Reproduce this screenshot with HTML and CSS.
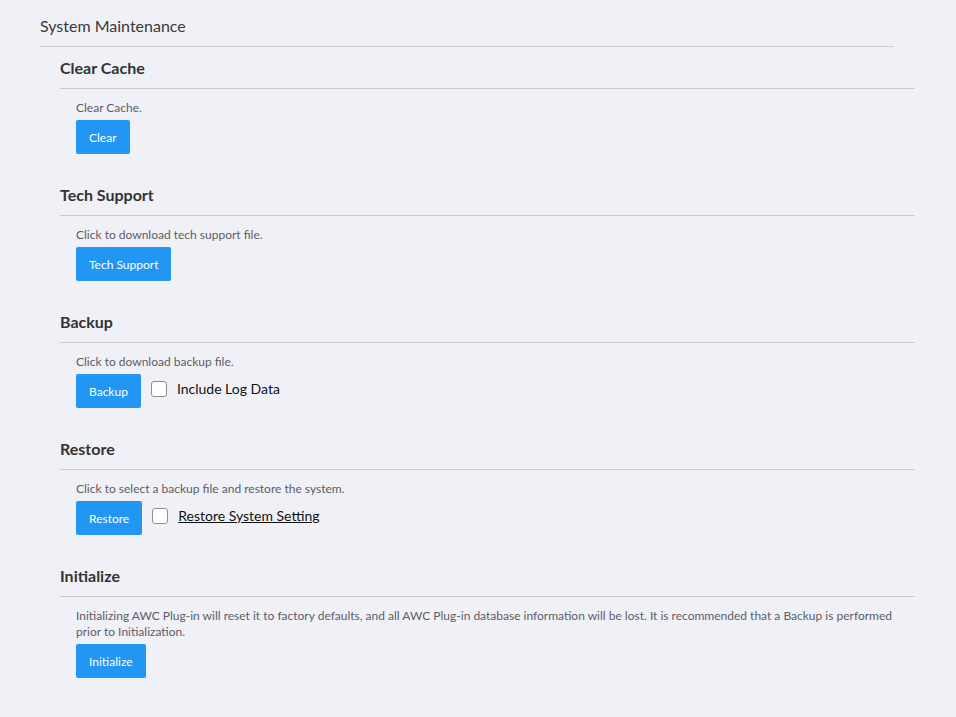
FILE: index.html
```html
<!DOCTYPE html>
<html lang="en">
<head>
  <meta charset="UTF-8" />
  <meta name="viewport" content="width=device-width, initial-scale=1.0"/>
  <title>System Maintenance</title>
  <link rel="stylesheet" href="styles.css">
</head>
<body>

  <div class="page">
    <h1 class="page-title">System Maintenance</h1>

    <div class="sections">
      <section class="block">
        <h2 class="block-title">Clear Cache</h2>
        <div class="block-body">
          <p class="desc">Clear Cache.</p>
          <div class="actions">
            <button class="btn">Clear</button>
          </div>
        </div>
      </section>

      <section class="block">
        <h2 class="block-title">Tech Support</h2>
        <div class="block-body">
          <p class="desc">Click to download tech support file.</p>
          <div class="actions">
            <button class="btn">Tech Support</button>
          </div>
        </div>
      </section>

      <section class="block">
        <h2 class="block-title">Backup</h2>
        <div class="block-body">
          <p class="desc">Click to download backup file.</p>
          <div class="actions">
            <button class="btn">Backup</button>
            <input type="checkbox" class="check" id="include-log" />
            <label for="include-log" class="check-label">Include Log Data</label>
          </div>
        </div>
      </section>

      <section class="block">
        <h2 class="block-title">Restore</h2>
        <div class="block-body">
          <p class="desc">Click to select a backup file and restore the system.</p>
          <div class="actions">
            <button class="btn">Restore</button>
            <input type="checkbox" class="check" id="restore-setting" />
            <label for="restore-setting" class="check-label link">Restore System Setting</label>
          </div>
        </div>
      </section>

      <section class="block">
        <h2 class="block-title">Initialize</h2>
        <div class="block-body">
          <p class="desc">Initializing AWC Plug-in will reset it to factory defaults, and all AWC Plug-in database information will be lost. It is recommended that a Backup is performed prior to Initialization.</p>
          <div class="actions">
            <button class="btn">Initialize</button>
          </div>
        </div>
      </section>
    </div>
  </div>

</body>
</html>
```

FILE: styles.css
```css
body, html {
  margin: 0;
  padding: 0;
  background: #f0f1f6;
  color: #333;
  font-family: Lato, "Noto Sans", sans-serif;
}

.page {
  padding: 16px 0 0 40px;
  width: 854px;
}

.page-title {
  margin: 0;
  font-size: 16px;
  font-weight: normal;
  line-height: 20px;
  color: #3a3a3a;
  padding-bottom: 10px;
  border-bottom: 1px solid #c9cbd0;
}

.sections {
  margin-left: 20px;
  width: 855px;
  padding-top: 11px;
}

.block {
  padding-bottom: 31px;
}

.block-title {
  margin: 0;
  font-size: 16px;
  font-weight: bold;
  line-height: 20px;
  color: #333;
  padding-bottom: 10px;
  border-bottom: 1px solid #c9cbd0;
}

.block-body {
  padding: 11px 0 0 16px;
}

.desc {
  margin: 0 0 4px;
  font-size: 12px;
  line-height: 16px;
  color: #5c5c66;
}

.actions {
  display: flex;
  align-items: flex-start;
}

.btn {
  height: 34px;
  padding: 0 13px;
  border: none;
  border-radius: 2px;
  background: #2196f3;
  color: white;
  font-family: inherit;
  font-size: 12px;
  cursor: pointer;
}

.check {
  appearance: none;
  width: 16px;
  height: 16px;
  margin: 7px 0 0 10px;
  border: 1px solid #8d8d96;
  border-radius: 3px;
  background: white;
}

.check-label {
  margin: 5px 0 0 10px;
  font-size: 14px;
  line-height: 20px;
  color: #111;
}

.check-label.link {
  text-decoration: underline;
}
```
